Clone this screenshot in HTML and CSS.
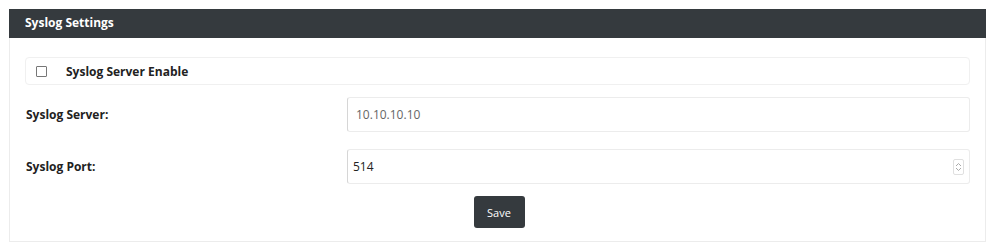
FILE: index.html
```html
<!DOCTYPE html>
<html>
<head>
<meta charset="utf-8">
<link rel="stylesheet" href="styles.css">
</head>
<body>
<div class="panel">
  <div class="panel-head">Syslog Settings</div>
  <div class="panel-body">
    <div class="check-row">
      <span class="checkbox"></span>
      <span class="check-label">Syslog Server Enable</span>
    </div>
    <div class="form-row">
      <label class="form-label">Syslog Server:</label>
      <div class="input">10.10.10.10</div>
    </div>
    <div class="form-row">
      <label class="form-label">Syslog Port:</label>
      <div class="input input-num"><span class="num-val">514</span>
        <svg class="spin" width="9" height="14" viewBox="0 0 9 14"><path d="M2 6 L4.5 3.5 L7 6" fill="none" stroke="#aaa" stroke-width="1"/><path d="M2 8 L4.5 10.5 L7 8" fill="none" stroke="#aaa" stroke-width="1"/></svg>
      </div>
    </div>
    <div class="actions"><button class="btn">Save</button></div>
  </div>
</div>
</body>
</html>
```
FILE: styles.css
```css
html, body { margin: 0; padding: 0; background: #fff; }
body { font-family: "Open Sans", "Noto Sans", sans-serif; color: #222; }
.panel {
  margin: 9px 7px 0 9px;
  border: 1px solid #ececec;
  height: 233px;
  box-sizing: border-box;
}
.panel-head {
  background: #353a3e;
  color: #fff;
  font-weight: 700;
  font-size: 12px;
  height: 29px;
  line-height: 28px;
  padding-left: 16px;
  margin: -1px -1px 0 -1px;
}
.panel-body { padding: 19px 15px 0 15px; }
.check-row {
  display: flex;
  align-items: center;
  height: 26px;
  border: 1px solid #f0f0f0;
  border-radius: 4px;
  padding-left: 10px;
}
.checkbox {
  width: 9px; height: 9px;
  border: 1px solid #777;
  border-radius: 1px;
  margin-right: 19px;
}
.check-label { font-weight: 700; font-size: 12px; }
.form-row {
  display: flex;
  align-items: center;
  margin-top: 12px;
}
.form-label {
  width: 321px;
  padding-left: 1px;
  font-weight: 700;
  font-size: 12px;
}
.input {
  flex: 1;
  height: 35px;
  border: 1px solid #ececec;
  border-left-color: #d6d6d6;
  border-radius: 3px;
  box-sizing: border-box;
  display: flex;
  align-items: center;
  padding-left: 8px;
  font-size: 12px;
  color: #666;
}
.form-row + .form-row { margin-top: 17px; }
.input-num { color: #222; padding-left: 5px; justify-content: space-between; padding-right: 5px; }
.spin { border: 1px solid #e0e0e0; border-radius: 2px; }
.actions { display: flex; justify-content: center; margin-top: 12px; padding-left: 3px; }
.btn {
  background: #353a3e;
  color: #fff;
  border: none;
  border-radius: 3px;
  width: 51px;
  height: 32px;
  font-family: "Open Sans", sans-serif;
  font-size: 11px;
}
```
